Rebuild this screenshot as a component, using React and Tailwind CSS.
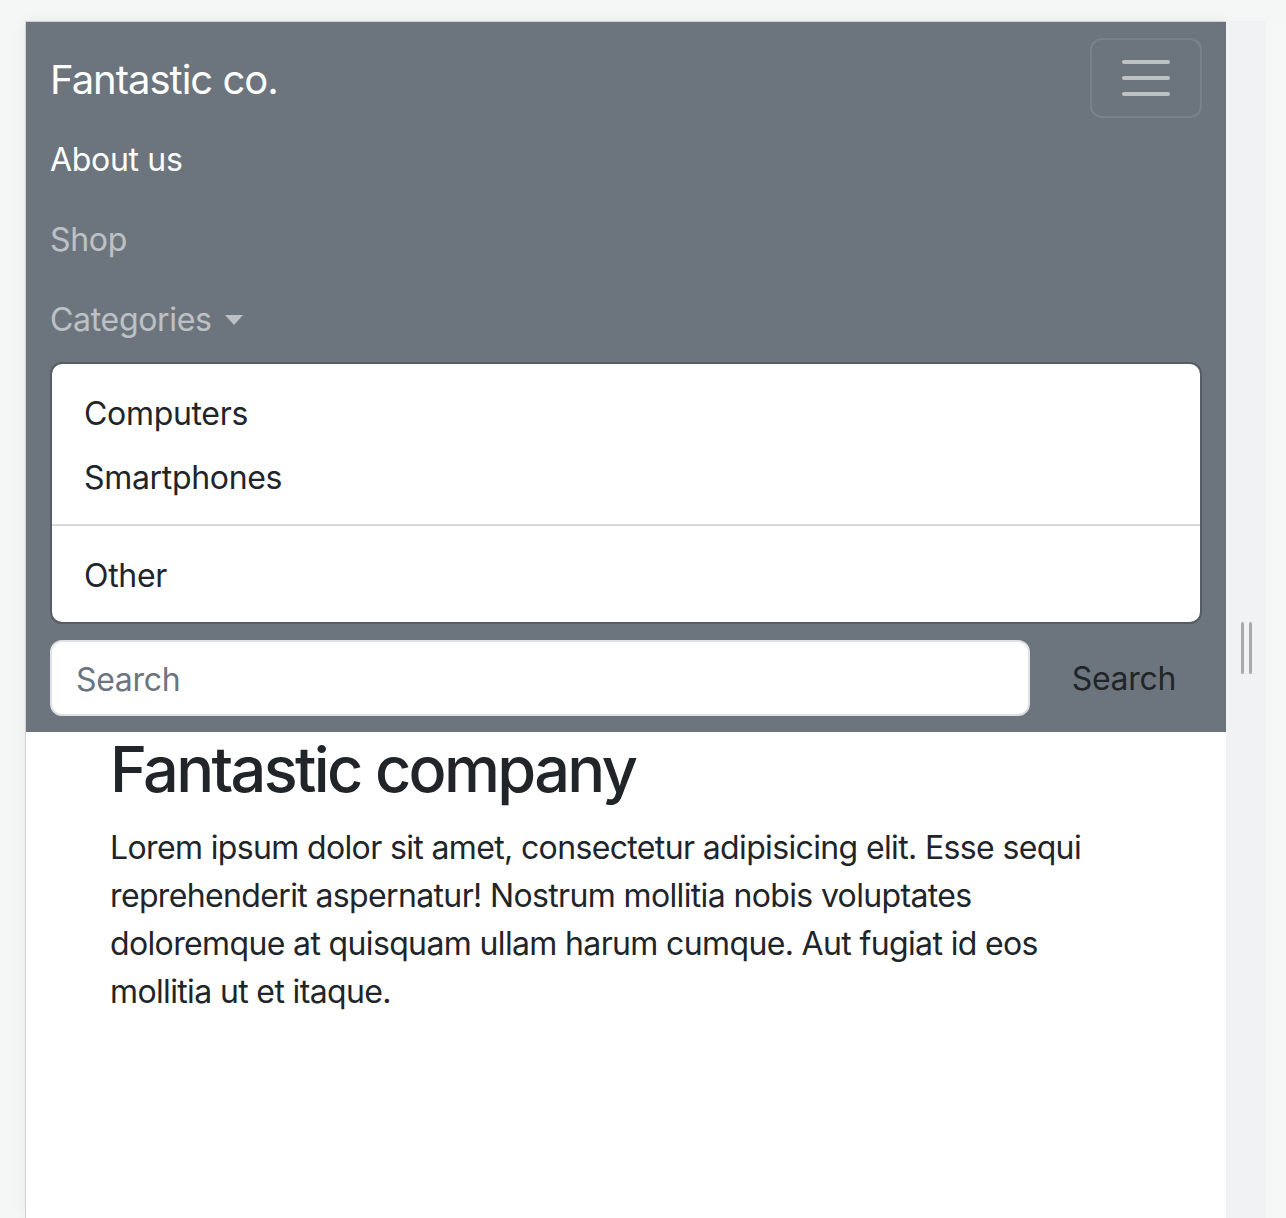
import React from "react";

const font = { fontFamily: "Inter, 'Noto Sans', 'Liberation Sans', sans-serif" };

function TogglerIcon() {
  return (
    <svg width="60" height="60" viewBox="0 0 30 30" aria-hidden="true">
      <path
        d="M4 7h22M4 15h22M4 23h22"
        stroke="rgba(255,255,255,0.55)"
        strokeWidth="2"
        strokeLinecap="round"
        fill="none"
      />
    </svg>
  );
}

export default function App() {
  return (
    <div className="h-[1218px] overflow-hidden bg-[#f5f6f6] flex pt-[21px] pl-[25px]" style={font}>
      {/* Preview frame */}
      <div className="w-[1201px] shrink-0 border-l border-t border-[#d0d1d2] bg-white flex flex-col shadow-[0_0_14px_rgba(0,0,0,0.06)]">
        <nav className="bg-[#6c757d] px-[24px] py-[16px] tracking-[-0.02em]">
          <div className="flex items-start justify-between">
            <a className="text-white text-[40px] leading-[60px] pt-[12px] pb-[8px] tracking-[-0.025em]">Fantastic co.</a>
            <button className="w-[112px] h-[80px] border-2 border-white/10 rounded-[12px] flex items-center justify-center">
              <TogglerIcon />
            </button>
          </div>

          <ul className="flex flex-col mb-[16px]">
            <li className="text-white text-[32px] leading-[48px] pt-[18px] pb-[14px]">About us</li>
            <li className="text-white/55 text-[32px] leading-[48px] pt-[18px] pb-[14px]">Shop</li>
            <li>
              <div className="text-white/55 text-[32px] leading-[48px] pt-[18px] pb-[14px] flex items-center">
                Categories
                <span className="ml-[13px] border-t-[10px] border-x-[9px] border-x-transparent border-t-white/55" />
              </div>
              <div className="mt-[4px] bg-white bg-clip-padding border-2 border-black/20 rounded-[12px] py-[16px] text-[#212529] text-[32px] leading-[48px]">
                <div className="px-[32px] pt-[10px] pb-[6px]">Computers</div>
                <div className="px-[32px] pt-[10px] pb-[6px]">Smartphones</div>
                <div className="my-[16px] border-t-2 border-black/15" />
                <div className="px-[32px] pt-[10px] pb-[6px]">Other</div>
              </div>
            </li>
          </ul>

          <form className="flex items-center" onSubmit={(e) => e.preventDefault()}>
            <input
              type="search"
              placeholder="Search"
              className="flex-1 mr-[16px] h-[76px] bg-white border-2 border-[#dee2e6] rounded-[12px] px-[24px] pt-[2px] text-[32px] text-[#212529] placeholder:text-[#6c757d] outline-none"
            />
            <button className="h-[76px] px-[24px] pt-[2px] border-2 border-transparent rounded-[12px] text-[32px] text-[#212529]">
              Search
            </button>
          </form>
        </nav>

        <div className="w-[1080px] mx-auto px-[24px] text-[#212529]">
          <h1 className="text-[63px] leading-[74px] font-medium tracking-[-0.042em] mb-[16px]">Fantastic company</h1>
          <p className="text-[32px] leading-[48px] tracking-[-0.02em] pt-[2px]">
            Lorem ipsum dolor sit amet, consectetur adipisicing elit. Esse sequi reprehenderit aspernatur! Nostrum
            mollitia nobis voluptates doloremque at quisquam ullam harum cumque. Aut fugiat id eos mollitia ut et
            itaque.
          </p>
        </div>
      </div>

      {/* Resize handle */}
      <div className="w-[40px] shrink-0 bg-[#f1f2f4] flex justify-center gap-[5px] pt-[601px]">
        <div className="w-[3px] h-[52px] rounded-full bg-[#a9a9a9]" />
        <div className="w-[3px] h-[52px] rounded-full bg-[#a9a9a9]" />
      </div>
      <div className="flex-1 bg-[#f6f7f7]" />
    </div>
  );
}
